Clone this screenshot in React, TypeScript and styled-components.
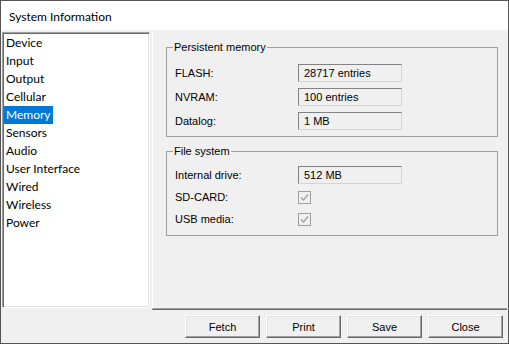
import { createGlobalStyle, styled } from "styled-components";

interface Row {
  label: string;
  value?: string;
  checked?: boolean;
}

const sections = ["Device", "Input", "Output", "Cellular", "Memory", "Sensors", "Audio", "User Interface", "Wired", "Wireless", "Power"];

const persistent: Row[] = [
  { label: "FLASH:", value: "28717 entries" },
  { label: "NVRAM:", value: "100 entries" },
  { label: "Datalog:", value: "1 MB" },
];

const fileSystem: Row[] = [
  { label: "Internal drive:", value: "512 MB" },
  { label: "SD-CARD:", checked: true },
  { label: "USB media:", checked: true },
];

const GlobalStyle = createGlobalStyle`
  html, body { margin: 0; padding: 0; background: #fff; }
  * { box-sizing: border-box; }
`;

const Window = styled.div`
  width: 509px;
  height: 344px;
  border: 1px solid #555;
  display: flex;
  flex-direction: column;
  background: #f0f0f0;
  font-family: "Liberation Sans", Arial, sans-serif;
  font-size: 11px;
  color: #000;
`;

const TitleBar = styled.div`
  height: 29px;
  flex: none;
  background: #fff;
  display: flex;
  align-items: center;
  padding: 1px 0 0 8px;
  font-family: "Segoe UI", Lato, sans-serif;
  font-size: 12px;
`;

const Main = styled.div`
  height: 280px;
  flex: none;
  display: flex;
  padding-top: 1px;
`;

const List = styled.ul`
  width: 148px;
  margin: 1px 0 2px 1px;
  padding: 1px 0 0 1px;
  list-style: none;
  background: #fff;
  border: 1px solid;
  border-color: #a0a0a0 #fff #fff #a0a0a0;
  box-shadow: inset 1px 1px 0 #696969, inset -1px -1px 0 #e3e3e3;
  font-family: "Segoe UI", Lato, sans-serif;
  font-size: 12px;
`;

const Item = styled.li<{ $selected?: boolean }>`
  height: 18px;
  line-height: 18px;
  span {
    display: inline-block;
    padding: 0 2px;
    background: ${(p) => (p.$selected ? "#0078d7" : "transparent")};
    color: ${(p) => (p.$selected ? "#fff" : "#000")};
  }
`;

const Panel = styled.div`
  flex: 1;
  margin: 0 1px 0 2px;
  border-left: 1px solid #fff;
  border-bottom: 1px solid #a0a0a0;
  box-shadow: 0 1px 0 #696969;
  height: 278px;
  padding: 10px 9px 0 13px;
  display: flex;
  flex-direction: column;
  gap: 8px;
`;

const Group = styled.fieldset<{ $top: number; $gap: number; $bottom: number }>`
  margin: 0;
  border: 1px solid #a0a0a0;
  padding: ${(p) => p.$top}px 8px ${(p) => p.$bottom}px 8px;
  display: grid;
  grid-template-columns: 123px 1fr;
  row-gap: ${(p) => p.$gap}px;
  align-items: center;
`;

const Caption = styled.legend`
  padding: 0 1px;
  margin-left: -2px;
  line-height: 13px;
`;

const Label = styled.span`
  line-height: 18px;
`;

const Field = styled.div`
  width: 104px;
  height: 18px;
  padding-left: 5px;
  line-height: 16px;
  border: 1px solid;
  border-color: #838383 #d4d4d4 #d4d4d4 #838383;
  background: #f0f0f0;
`;

const CheckRow = styled.div`
  height: 18px;
  display: flex;
  align-items: center;
`;

const Check = styled.span`
  width: 13px;
  height: 13px;
  border: 1px solid #a0a0a0;
  background: #f0f0f0;
  display: flex;
  align-items: center;
  justify-content: center;
`;

const Footer = styled.div`
  flex: 1;
  display: flex;
  justify-content: flex-end;
  gap: 6px;
  padding: 5px 5px 0 0;
`;

const Button = styled.button`
  width: 75px;
  height: 23px;
  padding: 0;
  background: #f0f0f0;
  font-family: "Liberation Sans", Arial, sans-serif;
  font-size: 11px;
  color: #000;
  border: 1px solid;
  border-color: #fff #696969 #696969 #fff;
  box-shadow: inset -1px -1px 0 #a0a0a0, inset 1px 1px 0 #e3e3e3;
`;

const CheckMark = () => (
  <svg width="9" height="9" viewBox="0 0 9 9">
    <path d="M1 4.5 L3.5 7 L8 1.5" fill="none" stroke="#a0a0a0" strokeWidth="1.3" />
  </svg>
);

interface GroupProps {
  title: string;
  rows: Row[];
  top: number;
  gap: number;
  bottom: number;
}

const GroupBox = ({ title, rows, top, gap, bottom }: GroupProps) => (
  <Group $top={top} $gap={gap} $bottom={bottom}>
    <Caption>{title}</Caption>
    {rows.map((row) => [
      <Label key={row.label}>{row.label}</Label>,
      row.value !== undefined ? (
        <Field key={row.label + "-v"}>{row.value}</Field>
      ) : (
        <CheckRow key={row.label + "-v"}>
          <Check>{row.checked && <CheckMark />}</Check>
        </CheckRow>
      ),
    ])}
  </Group>
);

const App = () => (
  <>
    <GlobalStyle />
    <Window>
      <TitleBar>System Information</TitleBar>
      <Main>
        <List>
          {sections.map((name) => (
            <Item key={name} $selected={name === "Memory"}>
              <span>{name}</span>
            </Item>
          ))}
        </List>
        <Panel>
          <GroupBox title="Persistent memory" rows={persistent} top={10} gap={6} bottom={6} />
          <GroupBox title="File system" rows={fileSystem} top={8} gap={4} bottom={7} />
        </Panel>
      </Main>
      <Footer>
        <Button>Fetch</Button>
        <Button>Print</Button>
        <Button>Save</Button>
        <Button>Close</Button>
      </Footer>
    </Window>
  </>
);

export default App;
